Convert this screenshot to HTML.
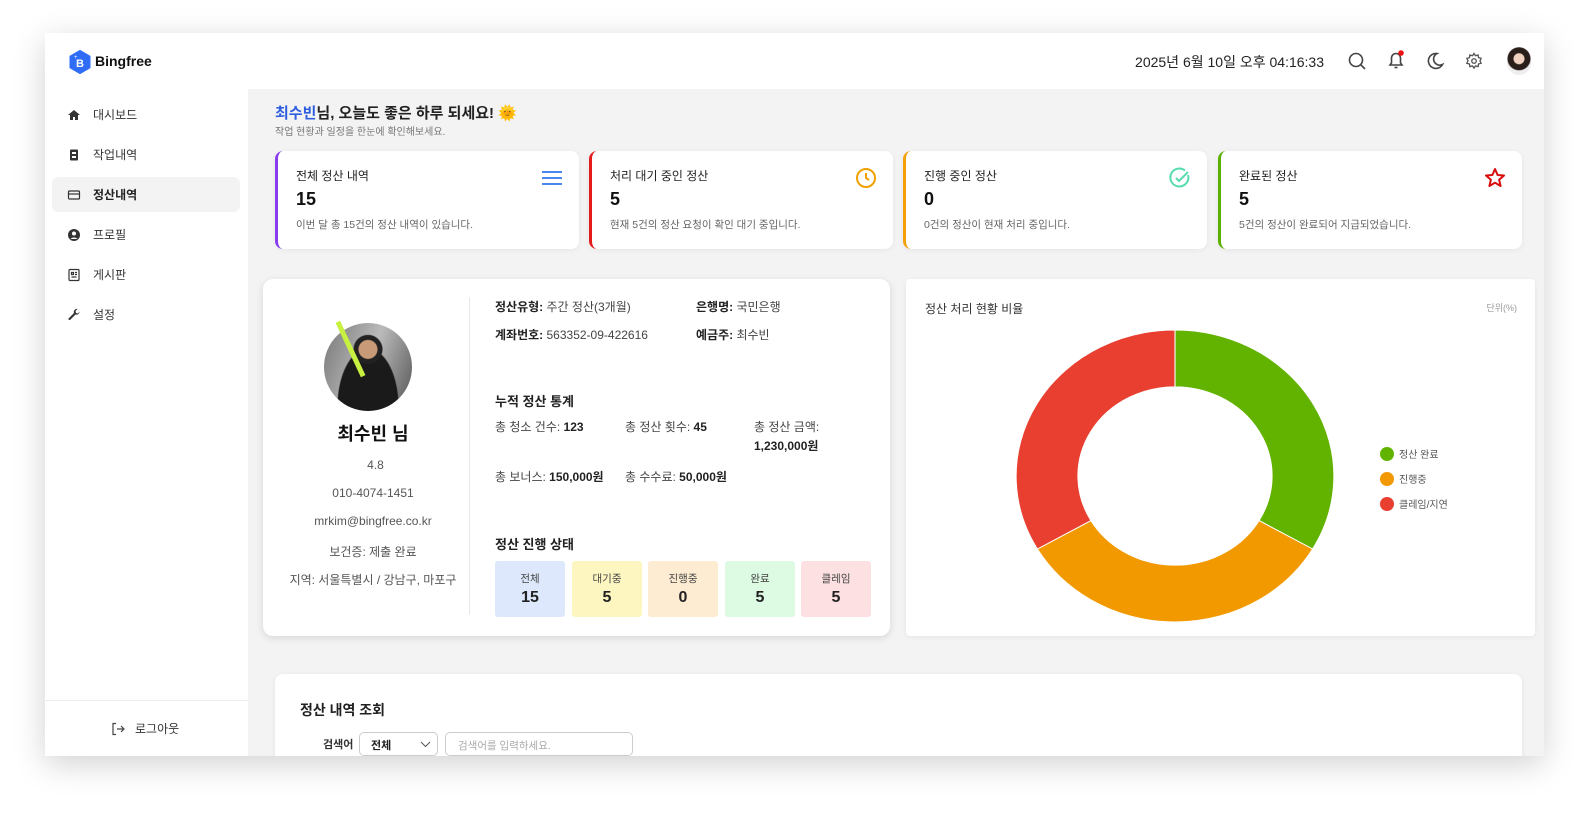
<!DOCTYPE html>
<html><head><meta charset="utf-8"><style>
*{box-sizing:border-box;margin:0;padding:0}
body{width:1590px;height:813px;background:#fff;font-family:"Liberation Sans","Noto Sans CJK KR",sans-serif;color:#222;position:relative;overflow:hidden}
.abs{position:absolute}
#frame{left:45px;top:33px;width:1499px;height:723px;background:#f3f3f3;box-shadow:0 8px 30px rgba(0,0,0,.18);overflow:hidden}
#hdr{left:0;top:0;width:1499px;height:56px;background:#fff}
#side{left:0;top:56px;width:203px;height:667px;background:#fff}
.nav{position:absolute;left:22px;font-size:12px;color:#333;display:flex;align-items:center;gap:12px}
.nav svg{width:14px;height:14px}
.card{position:absolute;background:#fff;border-radius:8px;box-shadow:0 1px 6px rgba(0,0,0,.06)}
.stat{top:118px;width:304px;height:98px;border-left:3px solid}
.stat .t{position:absolute;left:18px;top:16px;font-size:12px;color:#222}
.stat .n{position:absolute;left:18px;top:38px;font-size:18px;font-weight:bold;color:#111}
.stat .d{position:absolute;left:18px;top:66px;font-size:10.5px;color:#666}
.stat svg{position:absolute;right:16px;top:16px;width:22px;height:22px}
.lbl{position:absolute;font-size:12px;color:#444;white-space:nowrap}
.lbl b{color:#222}
.pl{position:absolute;left:0;width:220px;text-align:center;font-size:12px;color:#555}
.box{position:absolute;top:282px;width:70px;height:56px;border-radius:3px;text-align:center}
.box .a{font-size:10.5px;color:#444;margin-top:10px}
.box .b{font-size:16px;font-weight:bold;color:#222;margin-top:3px}
</style></head><body>
<div id="frame" class="abs">
 <div id="hdr" class="abs">
  <svg class="abs" style="left:24px;top:17px" width="22" height="24" viewBox="0 0 22 24"><path d="M11 1 L20.5 6.5 V17.5 L11 23 L1.5 17.5 V6.5Z" fill="#2f6df6" stroke="#2f6df6" stroke-linejoin="round" stroke-width="2"/><text x="11" y="17" font-size="11" font-weight="bold" fill="#fff" text-anchor="middle" font-family="Liberation Sans">B</text><text x="5" y="9" font-size="6" fill="#fff" font-family="Liberation Sans">+</text></svg>
  <div class="abs" style="left:50px;top:20px;font-size:14px;font-weight:bold;color:#111">Bingfree</div>
  <div class="abs" style="right:220px;top:19px;font-size:14px;color:#222">2025년 6월 10일 오후 04:16:33</div>
  <svg class="abs" style="left:1302px;top:18px" width="20" height="20" viewBox="0 0 20 20" fill="none" stroke="#444" stroke-width="1.6"><circle cx="9" cy="9" r="6.5"/><path d="M14 14l4 4"/></svg>
  <svg class="abs" style="left:1340px;top:16px" width="22" height="22" viewBox="0 0 22 22" fill="none" stroke="#444" stroke-width="1.6"><path d="M5 16h12l-1.5-2V9a4.5 4.5 0 0 0-9 0v5z"/><path d="M9.5 18.5h3"/><circle cx="16" cy="4" r="2.8" fill="#e11" stroke="none"/></svg>
  <svg class="abs" style="left:1380px;top:18px" width="20" height="20" viewBox="0 0 20 20" fill="none" stroke="#444" stroke-width="1.6"><path d="M12 2.5a7.5 7.5 0 1 0 5.5 11 6 6 0 0 1-5.5-11z"/></svg>
  <svg class="abs" style="left:1420px;top:19px" width="18" height="18" viewBox="0 0 24 24" fill="none" stroke="#555" stroke-width="1.8"><circle cx="12" cy="12" r="3"/><path d="M12 2l2 3 3.5-1 .5 3.5 3.5 1-1.5 3.5 1.5 3-3.5 1-.5 3.5-3.5-1-2 3-2-3-3.5 1-.5-3.5-3.5-1 1.5-3.5L2.5 8.5l3.5-1L6.5 4l3.5 1z"/></svg>
  <div class="abs" style="left:1462px;top:14px;width:24px;height:28px;border-radius:12px;background:radial-gradient(circle at 50% 42%,#f1d2c0 0 5px,#2a1e1a 6px 11px,#eee 12px)"></div>
 </div>
 <div id="side" class="abs">
  <div style="position:absolute;left:7px;top:88px;width:188px;height:35px;background:#f3f3f3;border-radius:6px"></div>
  <div class="nav" style="top:17px"><svg viewBox="0 0 14 14"><path d="M7 2L1 7h2v5h3V9h2v3h3V7h2z" fill="#333"/></svg>대시보드</div>
  <div class="nav" style="top:57px"><svg viewBox="0 0 14 14"><rect x="3" y="1.5" width="8" height="11" rx="1" fill="#333"/><rect x="5" y="4" width="4" height="2" fill="#fff"/><rect x="5" y="8" width="4" height="2" fill="#fff"/></svg>작업내역</div>
  <div class="nav" style="top:97px;font-weight:bold;color:#222"><svg viewBox="0 0 14 14" fill="none" stroke="#333" stroke-width="1.2"><rect x="1.5" y="3" width="11" height="8" rx="1"/><path d="M1.5 6h11"/></svg>정산내역</div>
  <div class="nav" style="top:137px"><svg viewBox="0 0 14 14"><circle cx="7" cy="7" r="6" fill="#333"/><circle cx="7" cy="5.5" r="2" fill="#fff"/><path d="M3.5 11a4 3 0 0 1 7 0" fill="#fff"/></svg>프로필</div>
  <div class="nav" style="top:177px"><svg viewBox="0 0 14 14" fill="none" stroke="#333" stroke-width="1.2"><rect x="2" y="1.5" width="10" height="11" rx="1"/><path d="M4.5 4.5h2v2h-2zM8 4.5h2M8 6.5h2M4.5 9h5"/></svg>게시판</div>
  <div class="nav" style="top:217px"><svg viewBox="0 0 14 14"><path d="M12.5 3.5a3 3 0 0 1-4 3L3 12a1.2 1.2 0 0 1-1.5-1.5L7 5a3 3 0 0 1 3.5-4L8.5 3l.5 2 2 .5z" fill="#333"/></svg>설정</div>
  <div style="position:absolute;left:0;top:611px;width:203px;height:1px;background:#eee;box-shadow:0 -2px 6px rgba(0,0,0,.05)"></div>
  <div class="abs" style="left:66px;top:631px;font-size:12px;color:#333;display:flex;gap:10px;align-items:center"><svg width="14" height="14" viewBox="0 0 14 14" fill="none" stroke="#444" stroke-width="1.2"><path d="M5 1.5H2v11h3M6 7h7M10 4l3 3-3 3"/></svg>로그아웃</div>
 </div>
 <div class="abs" style="left:230px;top:69px;font-size:15px;font-weight:bold;color:#222"><span style="color:#2f5fe0">최수빈</span>님, 오늘도 좋은 하루 되세요! 🌞</div>
 <div class="abs" style="left:230px;top:90px;font-size:10px;color:#777">작업 현황과 일정을 한눈에 확인해보세요.</div>

 <div class="card stat" style="left:230px;border-color:#8b3cf0"><div class="t">전체 정산 내역</div><div class="n">15</div><div class="d">이번 달 총 15건의 정산 내역이 있습니다.</div><svg viewBox="0 0 22 22" stroke="#4a86f0" stroke-width="2"><path d="M1 5h20M1 11h20M1 17h20"/></svg></div>
 <div class="card stat" style="left:544px;border-color:#e51b1b"><div class="t">처리 대기 중인 정산</div><div class="n">5</div><div class="d">현재 5건의 정산 요청이 확인 대기 중입니다.</div><svg viewBox="0 0 22 22" fill="none" stroke="#f0a000" stroke-width="2"><circle cx="11" cy="11" r="9"/><path d="M11 6v5l3 2"/></svg></div>
 <div class="card stat" style="left:858px;border-color:#f5a00b"><div class="t">진행 중인 정산</div><div class="n">0</div><div class="d">0건의 정산이 현재 처리 중입니다.</div><svg viewBox="0 0 22 22" fill="none" stroke="#55dbb0" stroke-width="2"><path d="M19 8a9 9 0 1 1-3-4.5"/><path d="M7 11l3 3 9-9"/></svg></div>
 <div class="card stat" style="left:1173px;border-color:#5cb000"><div class="t">완료된 정산</div><div class="n">5</div><div class="d">5건의 정산이 완료되어 지급되었습니다.</div><svg viewBox="0 0 22 22" fill="none" stroke="#d80c0c" stroke-width="2" stroke-linejoin="round"><path d="M11 2l2.6 6 6.4.5-4.9 4.2 1.5 6.3L11 15.7 5.4 19l1.5-6.3L2 8.5 8.4 8z"/></svg></div>

 <div class="card" style="left:218px;top:246px;width:627px;height:357px;border-radius:10px;box-shadow:0 2px 8px rgba(0,0,0,.12)">
  <div class="abs" style="left:61px;top:44px;width:88px;height:88px;border-radius:50%;background:radial-gradient(circle at 50% 30%,#c89a78 0 9px,#222 10px 14px,transparent 15px),radial-gradient(ellipse at 50% 95%,#1a1a1a 0 30px,transparent 31px),linear-gradient(110deg,#777,#bbb 50%,#555)"></div>
  <div class="abs" style="left:85px;top:40px;width:5px;height:60px;background:#c8f040;transform:rotate(-25deg)"></div>
  <div class="pl" style="left:0;width:220px;top:141px;font-size:18px;font-weight:bold;color:#111">최수빈 님</div>
  <div class="pl" style="top:179px;width:225px">4.8</div>
  <div class="pl" style="top:207px">010-4074-1451</div>
  <div class="pl" style="top:235px">mrkim@bingfree.co.kr</div>
  <div class="pl" style="top:264px">보건증: 제출 완료</div>
  <div class="pl" style="top:292px">지역: 서울특별시 / 강남구, 마포구</div>
  <div class="abs" style="left:206px;top:18px;width:1px;height:318px;background:#e6e6e6"></div>
  <div class="lbl" style="left:232px;top:19px"><b>정산유형:</b> 주간 정산(3개월)</div>
  <div class="lbl" style="left:433px;top:19px"><b>은행명:</b> 국민은행</div>
  <div class="lbl" style="left:232px;top:47px"><b>계좌번호:</b> 563352-09-422616</div>
  <div class="lbl" style="left:433px;top:47px"><b>예금주:</b> 최수빈</div>
  <div class="lbl" style="left:232px;top:112px;font-size:13px;font-weight:bold;color:#222">누적 정산 통계</div>
  <div class="lbl" style="left:232px;top:139px">총 청소 건수: <b>123</b></div>
  <div class="lbl" style="left:362px;top:139px">총 정산 횟수: <b>45</b></div>
  <div class="lbl" style="left:491px;top:139px;line-height:19px">총 정산 금액:<br><b>1,230,000원</b></div>
  <div class="lbl" style="left:232px;top:189px">총 보너스: <b>150,000원</b></div>
  <div class="lbl" style="left:362px;top:189px">총 수수료: <b>50,000원</b></div>
  <div class="lbl" style="left:232px;top:255px;font-size:13px;font-weight:bold;color:#222">정산 진행 상태</div>
  <div class="box" style="left:232px;background:#dde8fc"><div class="a">전체</div><div class="b">15</div></div>
  <div class="box" style="left:309px;background:#fdf6c0"><div class="a">대기중</div><div class="b">5</div></div>
  <div class="box" style="left:385px;background:#fdebd2"><div class="a">진행중</div><div class="b">0</div></div>
  <div class="box" style="left:462px;background:#ddfbe3"><div class="a">완료</div><div class="b">5</div></div>
  <div class="box" style="left:538px;background:#fde0e1"><div class="a">클레임</div><div class="b">5</div></div>
 </div>

 <div class="card" style="left:861px;top:246px;width:629px;height:357px;border-radius:4px">
  <div class="abs" style="left:19px;top:21px;font-size:12px;color:#333">정산 처리 현황 비율</div>
  <div class="abs" style="right:18px;top:22px;font-size:9px;color:#999">단위(%)</div>
  <svg class="abs" style="left:109px;top:50px" width="320" height="294" viewBox="-150 -150 300 300" preserveAspectRatio="none">
   <g stroke="#fff" stroke-width="1">
   <path d="M0 -149 A149 149 0 0 1 129 74.5 L78.8 45.5 A91 91 0 0 0 0 -91Z" fill="#62b200"/>
   <path d="M129 74.5 A149 149 0 0 1 -129 74.5 L-78.8 45.5 A91 91 0 0 0 78.8 45.5Z" fill="#f29900"/>
   <path d="M-129 74.5 A149 149 0 0 1 0 -149 L0 -91 A91 91 0 0 0 -78.8 45.5Z" fill="#e83f30"/>
   </g>
  </svg>
  <div class="abs" style="left:474px;top:164px;font-size:10px;color:#555;line-height:25px">
   <div><span style="display:inline-block;width:14px;height:14px;border-radius:50%;background:#62b200;vertical-align:-3px;margin-right:5px"></span>정산 완료</div>
   <div><span style="display:inline-block;width:14px;height:14px;border-radius:50%;background:#f29900;vertical-align:-3px;margin-right:5px"></span>진행중</div>
   <div><span style="display:inline-block;width:14px;height:14px;border-radius:50%;background:#e83f30;vertical-align:-3px;margin-right:5px"></span>클레임/지연</div>
  </div>
 </div>

 <div class="card" style="left:230px;top:641px;width:1247px;height:120px">
  <div class="abs" style="left:25px;top:26px;font-size:14px;font-weight:bold;color:#222">정산 내역 조회</div>
  <div class="abs" style="left:48px;top:62px;font-size:11px;font-weight:bold;color:#333">검색어</div>
  <div class="abs" style="left:84px;top:58px;width:79px;height:24px;border:1px solid #ccc;border-radius:5px;font-size:11px;font-weight:bold;padding:4px 11px;color:#222">전체<svg style="position:absolute;right:6px;top:8px" width="11" height="7" viewBox="0 0 11 7" fill="none" stroke="#555"><path d="M1 1l4.5 4.5L10 1"/></svg></div>
  <div class="abs" style="left:170px;top:58px;width:188px;height:24px;border:1px solid #ccc;border-radius:5px;font-size:10.5px;padding:5px 12px;color:#aaa">검색어를 입력하세요.</div>
 </div>
</div>
</body></html>
